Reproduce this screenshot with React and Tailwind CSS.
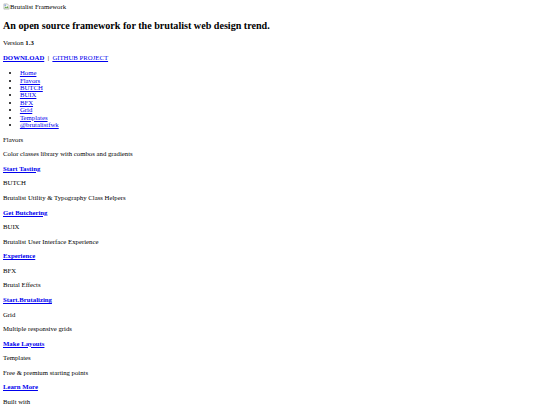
const NAV = ['Home', 'Flavors', 'BUTCH', 'BUIX', 'BFX', 'Grid', 'Templates', '@brutalistfwk']

const SECTIONS = [
  { title: 'Flavors',   text: 'Color classes library with combos and gradients', cta: 'Start Tasting' },
  { title: 'BUTCH',     text: 'Brutalist Utility & Typography Class Helpers',    cta: 'Get Butchering' },
  { title: 'BUIX',      text: 'Brutalist User Interface Experience',             cta: 'Experience' },
  { title: 'BFX',       text: 'Brutal Effects',                                  cta: 'Start.Brutalizing' },
  { title: 'Grid',      text: 'Multiple responsive grids',                       cta: 'Make Layouts' },
  { title: 'Templates', text: 'Free & premium starting points',                  cta: 'Learn More' },
]

const link = 'text-[#0000ee] underline'
const para = 'my-[7.15px]'

function BrokenImage() {
  return (
    <span className="inline-flex items-end h-[7.43px]">
      <svg width="7" height="7" viewBox="0 0 16 16" className="inline-block">
        <path d="M2 2h8l4 4v8H2z" fill="#f1f1f1" stroke="#8a8a8a" />
        <path d="M3 12l3-4 2 2 2-3 3 5z" fill="#6aa84f" />
        <circle cx="5" cy="5" r="1.3" fill="#3c78d8" />
      </svg>
      <span>Brutalist Framework</span>
    </span>
  )
}

export default function App() {
  return (
    <div className="w-[540px] min-h-[405px] bg-white text-black font-['Liberation_Serif',serif] text-[6.75px] leading-[7.43px]">
      <div className="p-[3px]">
        <div className="h-[7.43px] leading-[7.43px]"><BrokenImage /></div>
        <h1 className="text-[10.125px] leading-[11px] font-bold mt-[9.5px] mb-[8px]">An open source framework for the brutalist web design trend.</h1>
        <p className={para}>Version <strong>1.3</strong></p>
        <p className={para}>
          <strong><a href="#" className={link}>DOWNLOAD</a></strong>&nbsp;&nbsp;|&nbsp;&nbsp;<a href="#" className={link}>GITHUB PROJECT</a>
        </p>
        <ul className="mt-[8.2px] mb-[7.15px] pl-[16.9px] list-disc">
          {NAV.map((n) => (
            <li key={n} className="h-[7.43px]"><a href="#" className={link}>{n}</a></li>
          ))}
        </ul>
        {SECTIONS.map((s) => (
          <div key={s.title}>
            <p className={para}>{s.title}</p>
            <p className={para}>{s.text}</p>
            <p className={para}><strong><a href="#" className={link}>{s.cta}</a></strong></p>
          </div>
        ))}
        <p className={para}>Built with</p>
      </div>
    </div>
  )
}
